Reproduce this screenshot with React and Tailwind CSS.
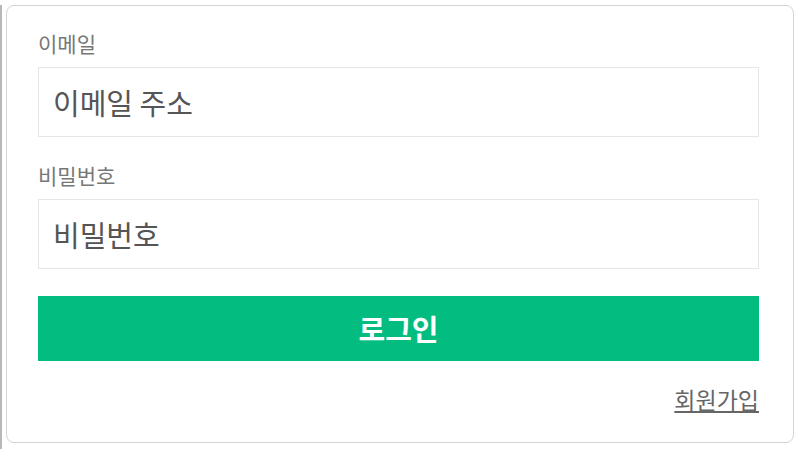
const fontStack = { fontFamily: '"Noto Sans CJK KR", "Noto Sans", sans-serif' };

function Field({ label, placeholder, className = "" }) {
  return (
    <div className={className}>
      <label className="block text-[21px] leading-[26px] text-[#777]">{label}</label>
      <input
        type="text"
        placeholder={placeholder}
        className="mt-[11px] block w-full h-[70px] border border-[#e6e6e6] bg-white px-[14px] text-[29px] text-[#444] placeholder:text-[#555] outline-none"
      />
    </div>
  );
}

export default function App() {
  return (
    <div className="w-[800px] h-[449px] bg-white border-l-2 border-[#b8b8b8]" style={fontStack}>
      <div className="ml-[4px] mt-[5px] w-[788px] h-[438px] rounded-lg border border-[#d4d4d4] pl-[31px] pr-[34px] pt-[24px]">
        <Field label="이메일" placeholder="이메일 주소" />
        <Field label="비밀번호" placeholder="비밀번호" className="mt-[25px]" />
        <button className="mt-[27px] w-full h-[65px] bg-[#03bd80] text-white text-[29px] font-bold">
          로그인
        </button>
        <div className="mt-[24px] flex justify-end">
          <a href="#" className="text-[23px] leading-[28px] text-[#666] underline underline-offset-2">
            회원가입
          </a>
        </div>
      </div>
    </div>
  );
}
